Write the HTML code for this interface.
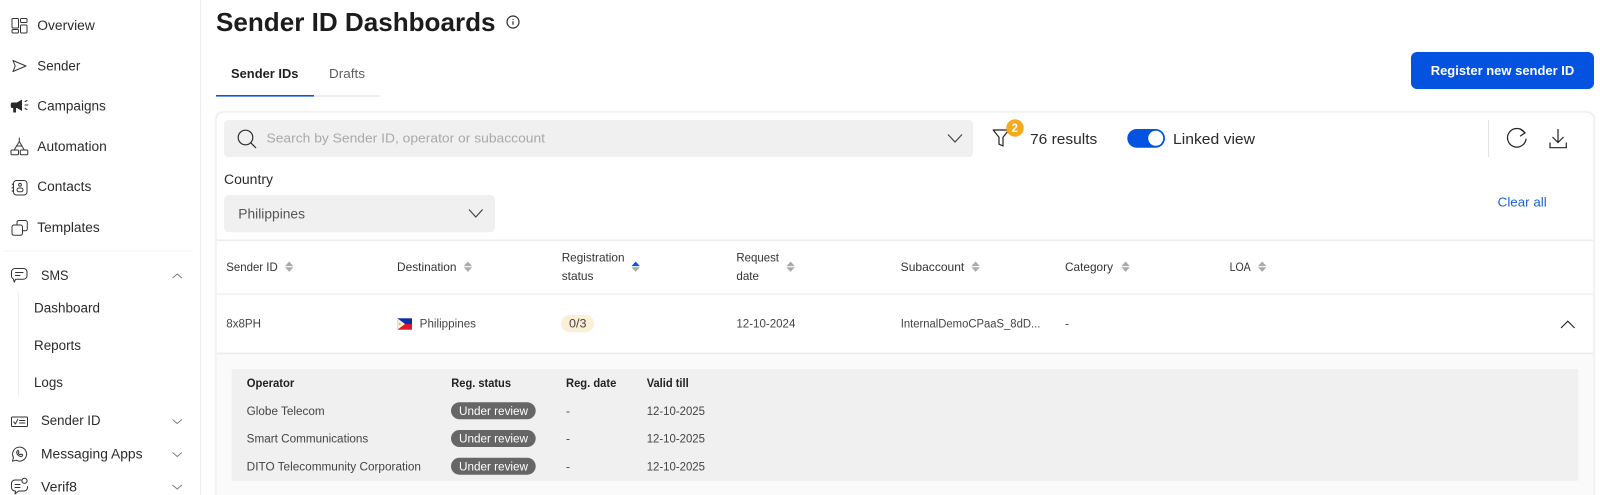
<!DOCTYPE html>
<html lang="en"><head><meta charset="utf-8"><title>Sender ID Dashboards</title>
<style>
html,body{margin:0;padding:0;background:#fff;width:1600px;height:495px;overflow:hidden}
svg{display:block}
text{font-family:"Liberation Sans",sans-serif;fill:#222}
.n{font-size:13.5px;fill:#2b2b2b}
.h{font-size:12px;fill:#333}
.t{font-size:11.5px;fill:#444}
.b{font-size:11.5px;font-weight:700;fill:#222}
.p{font-size:11.5px;fill:#fff}
.i{fill:none;stroke:#333;stroke-width:1;stroke-linejoin:round;stroke-linecap:round}
.c{fill:none;stroke:#777;stroke-width:.9}
.s1{fill:#aaa}
</style></head><body>
<svg width="1600" height="495" viewBox="0 0 1600 495" xmlns="http://www.w3.org/2000/svg">
<defs><filter id="sh" x="-2%" y="-5%" width="104%" height="110%"><feGaussianBlur stdDeviation="1"/></filter>
<g id="so"><path d="M0 4.600 4.200 0 8.400 4.600Z" class="s1"/><path d="M0 5.800 4.200 10.400 8.400 5.800Z" class="s1"/></g></defs>
<rect width="1600" height="495" fill="#fff"/>
<!-- sidebar -->
<rect x="200" y="0" width="1" height="495" fill="#ececec"/>
<rect x="4" y="250.500" width="189" height="1" fill="#f2f2f2"/>
<rect x="18" y="293" width="1" height="104" fill="#f0f0f0"/>
<g class="i">
<rect x="12" y="18.500" width="6.500" height="9.500" rx="1"/><rect x="20.500" y="18.500" width="6.500" height="4" rx="1"/><rect x="12" y="29.500" width="6.500" height="3.500" rx="1"/><rect x="20.500" y="25" width="6.500" height="8" rx="1"/>
<path d="M13 60.500 26 66 13 71.500 15.200 66Z"/>
<path d="M19.300 138v3.500M19.300 141.500 14.500 149.500M19.300 141.500 24 149.500M16.500 146h5.500"/><rect x="11" y="150" width="7.500" height="4.800" rx="1"/><rect x="20.300" y="150" width="7.500" height="4.800" rx="1"/>
<rect x="13.500" y="180.500" width="13.500" height="14.500" rx="3"/><circle cx="20" cy="184.800" r="1.400"/><rect x="17" y="188" width="6" height="3.800" rx="1.900"/><path d="M12.300 184v.8M12.300 187.300v.8M12.300 190.600v.8"/>
<path d="M17 225v-2.500a2 2 0 0 1 2-2h6.300a2 2 0 0 1 2 2v6.300a2 2 0 0 1-2 2H22.500"/><rect x="12" y="225" width="10.500" height="10.300" rx="2"/>
<path d="M15.500 268.500h8a3.500 3.500 0 0 1 3.500 3.500v3.700a3.500 3.500 0 0 1-3.500 3.500h-8l-1.200 3-1-3.300A3.500 3.500 0 0 1 11.500 275.700V272a3.500 3.500 0 0 1 4-3.500Z"/><path d="M15.500 272.500h7.500M15.500 275.500h4.500"/>
<rect x="11.500" y="417" width="16" height="9.500" rx="1"/><path d="M13.800 421.800 15.300 424 17.800 419.300M19.500 420.500h5.500M19.500 423h5.500"/>
<path d="M12.500 461.200l1-3.700a7 7 0 1 1 2.700 2.700Z"/><path d="M16.800 451.500c-.6 2.600 2.300 5.500 5 5l1-1.500-2-1-.8.8c-.8-.3-1.500-1-1.800-1.800l.8-.8-1-2Z"/>
<path d="M21 480h-6a3.500 3.500 0 0 0-3.500 3.500v4a3.500 3.500 0 0 0 3.500 3.500h.5l-.5 3 3.500-3h5.500a3.500 3.500 0 0 0 3.500-3.500V486.500"/><circle cx="24.500" cy="480.800" r="2.600"/><path d="M15 484.500h5M15 487.500h5"/>
</g>
<path d="M10.800 104c0-1 .7-1.500 1.500-1.500H17l5-3v11.500l-5-3h-1v4.500h-2.800v-4.500h-1c-.8 0-1.400-.6-1.400-1.500Z" fill="#2a2a2a"/><path d="M25 101.500l2-1M25 105h2.800M25 108.500l2 1" class="i"/>
<g class="c"><path d="M172.500 278l4.700-4 4.700 4"/><path d="M172.500 419.500l4.700 4 4.700-4"/><path d="M172.500 452.500l4.700 4 4.700-4"/><path d="M172.500 485l4.700 4 4.700-4"/></g>
<text class="n" x="37.300" y="30" textLength="57.500" lengthAdjust="spacingAndGlyphs">Overview</text>
<text class="n" x="37.300" y="70.500" textLength="43" lengthAdjust="spacingAndGlyphs">Sender</text>
<text class="n" x="37.300" y="110.500" textLength="68.500" lengthAdjust="spacingAndGlyphs">Campaigns</text>
<text class="n" x="37.300" y="151" textLength="69.500" lengthAdjust="spacingAndGlyphs">Automation</text>
<text class="n" x="37.300" y="191" textLength="54" lengthAdjust="spacingAndGlyphs">Contacts</text>
<text class="n" x="37.300" y="232" textLength="62.500" lengthAdjust="spacingAndGlyphs">Templates</text>
<text class="n" x="41" y="280" textLength="27.500" lengthAdjust="spacingAndGlyphs">SMS</text>
<text class="n" x="34" y="312.500" textLength="66" lengthAdjust="spacingAndGlyphs">Dashboard</text>
<text class="n" x="34" y="350" textLength="47" lengthAdjust="spacingAndGlyphs">Reports</text>
<text class="n" x="34" y="387" textLength="29" lengthAdjust="spacingAndGlyphs">Logs</text>
<text class="n" x="41" y="425" textLength="59.500" lengthAdjust="spacingAndGlyphs">Sender ID</text>
<text class="n" x="41" y="458.500" textLength="101.500" lengthAdjust="spacingAndGlyphs">Messaging Apps</text>
<text class="n" x="41" y="491.500" textLength="36" lengthAdjust="spacingAndGlyphs">Verif8</text>
<!-- header -->
<text x="216" y="31" font-size="26" font-weight="700" style="fill:#1c1c1c" textLength="279.500" lengthAdjust="spacingAndGlyphs">Sender ID Dashboards</text>
<circle cx="513" cy="22" r="6" fill="none" stroke="#2a2a2a" stroke-width="1.200"/><path d="M513 21.200v3.500M513 19v.9" stroke="#2a2a2a" stroke-width="1.200"/>
<text x="231" y="78" font-size="13" font-weight="700" style="fill:#1f1f1f" textLength="67.500" lengthAdjust="spacingAndGlyphs">Sender IDs</text>
<text x="329" y="78" font-size="13" style="fill:#5e5e5e" textLength="36" lengthAdjust="spacingAndGlyphs">Drafts</text>
<rect x="216" y="95.500" width="164" height="1" fill="#dedede"/><rect x="216" y="95" width="98" height="1.600" fill="#0a56de"/>
<rect x="1411" y="52" width="183" height="37" rx="6" fill="#0353e0"/>
<text x="1430.700" y="75" font-size="13" font-weight="700" style="fill:#fff" textLength="143.600" lengthAdjust="spacingAndGlyphs">Register new sender ID</text>
<!-- card -->
<rect x="216" y="112" width="1378" height="400" rx="7" fill="#bbb" opacity=".55" filter="url(#sh)"/>
<rect x="216.500" y="112.500" width="1377" height="400" rx="7" fill="#fff"/>
<rect x="224" y="120" width="749" height="37" rx="4" fill="#f0f0f0"/>
<circle cx="245.500" cy="137.500" r="7.300" fill="none" stroke="#2e2e2e" stroke-width="1.200"/><path d="M250.800 142.800 256 148" stroke="#2e2e2e" stroke-width="1.200"/>
<text x="266.500" y="142.700" font-size="13" style="fill:#a9a9a9" textLength="278.500" lengthAdjust="spacingAndGlyphs">Search by Sender ID, operator or subaccount</text>
<path d="M948 134.500l7 7.500 7-7.500" fill="none" stroke="#444" stroke-width="1.200"/>
<path d="M993.200 130h15.600l-5.800 7.200v8.800l-4-1.800v-7Z" fill="none" stroke="#222" stroke-width="1.200" stroke-linejoin="round"/>
<circle cx="1015" cy="128" r="8.700" fill="#f6a91b"/>
<text x="1011.500" y="132.200" font-size="11.500" font-weight="700" style="fill:#fff">2</text>
<text x="1030" y="144" font-size="14.500" style="fill:#2a2a2a" textLength="67.300" lengthAdjust="spacingAndGlyphs">76 results</text>
<rect x="1127.300" y="129" width="37.700" height="18.700" rx="9.350" fill="#0353e0"/><circle cx="1155.700" cy="138.300" r="7.500" fill="#fff"/>
<text x="1173" y="144" font-size="14.500" style="fill:#2a2a2a" textLength="82" lengthAdjust="spacingAndGlyphs">Linked view</text>
<rect x="1488" y="120" width="1" height="37" fill="#e2e2e2"/>
<path d="M1524.500 132.500a9.300 9.300 0 1 0 1.600 6.200" fill="none" stroke="#222" stroke-width="1.200"/><path d="M1519.500 128.500l5.600 4.300-5 3.400" fill="none" stroke="#222" stroke-width="1.200"/>
<path d="M1558 129v13M1552.500 137l5.500 5.500 5.500-5.500M1550 142.500v5.200h16.300v-5.200" fill="none" stroke="#222" stroke-width="1.200"/>
<text x="224" y="184" font-size="13.500" style="fill:#2a2a2a" textLength="49" lengthAdjust="spacingAndGlyphs">Country</text>
<rect x="224" y="195" width="271" height="37.300" rx="5" fill="#f0f0f0"/>
<text x="238.300" y="218.300" font-size="13.500" style="fill:#555" textLength="66.700" lengthAdjust="spacingAndGlyphs">Philippines</text>
<path d="M469 209.500l6.800 7.500 6.800-7.500" fill="none" stroke="#444" stroke-width="1.200"/>
<text x="1497.700" y="206.700" font-size="13" style="fill:#1a5fe0" textLength="49" lengthAdjust="spacingAndGlyphs">Clear all</text>
<!-- table -->
<rect x="217" y="239.500" width="1376" height="1.500" fill="#ececec"/>
<rect x="217" y="293.500" width="1376" height="1.300" fill="#efefef"/>
<rect x="217" y="354" width="1376" height="141" fill="#fafafa"/>
<rect x="217" y="352.500" width="1376" height="1.800" fill="#ececec"/>
<text class="h" x="226.300" y="271" textLength="51.400" lengthAdjust="spacingAndGlyphs">Sender ID</text><use href="#so" x="285" y="261.500"/>
<text class="h" x="397" y="271" textLength="59.500" lengthAdjust="spacingAndGlyphs">Destination</text><use href="#so" x="463.700" y="261.500"/>
<text class="h" x="561.700" y="261.700" textLength="62.800" lengthAdjust="spacingAndGlyphs">Registration</text>
<text class="h" x="561.700" y="280" textLength="31.800" lengthAdjust="spacingAndGlyphs">status</text>
<path d="M631.500 266.100 635.700 261.500 639.900 266.100Z" fill="#0a56de"/><path d="M631.500 267.300 635.700 271.900 639.900 267.300Z" class="s1"/>
<text class="h" x="736.400" y="261.700" textLength="42.600" lengthAdjust="spacingAndGlyphs">Request</text>
<text class="h" x="736.400" y="280" textLength="22.600" lengthAdjust="spacingAndGlyphs">date</text><use href="#so" x="786.400" y="261.500"/>
<text class="h" x="900.700" y="271" textLength="63.600" lengthAdjust="spacingAndGlyphs">Subaccount</text><use href="#so" x="971.400" y="261.500"/>
<text class="h" x="1065" y="271" textLength="48" lengthAdjust="spacingAndGlyphs">Category</text><use href="#so" x="1121.400" y="261.500"/>
<text class="h" x="1229.600" y="271" textLength="21.100" lengthAdjust="spacingAndGlyphs">LOA</text><use href="#so" x="1258" y="261.500"/>
<text class="t" x="226.300" y="327.700" textLength="34.700" lengthAdjust="spacingAndGlyphs">8x8PH</text>
<rect x="397.300" y="318.300" width="14.700" height="5.700" fill="#0a2fa8"/><rect x="397.300" y="324" width="14.700" height="5.700" fill="#d8192f"/><path d="M397.300 318.300 405 324 397.300 329.700Z" fill="#f7f3e4"/><circle cx="399.700" cy="324" r="1.200" fill="#f2c230"/>
<text class="t" x="419.700" y="327.700" textLength="56.300" lengthAdjust="spacingAndGlyphs">Philippines</text>
<rect x="561.300" y="315" width="32.700" height="17.300" rx="8.650" fill="#fbefd5"/>
<text class="t" x="569" y="327.700" textLength="17.500" lengthAdjust="spacingAndGlyphs">0/3</text>
<text class="t" x="736.400" y="327.700" textLength="59" lengthAdjust="spacingAndGlyphs">12-10-2024</text>
<text class="t" x="900.700" y="327.700" textLength="139.700" lengthAdjust="spacingAndGlyphs">InternalDemoCPaaS_8dD...</text>
<text class="t" x="1065" y="327.700" textLength="4" lengthAdjust="spacingAndGlyphs">-</text>
<path d="M1561 328l6.800-6.800 6.800 6.800" fill="none" stroke="#222" stroke-width="1.100"/>
<!-- nested -->
<rect x="231.700" y="369" width="1346.600" height="111.700" fill="#f0f0f0"/>
<text class="b" x="246.700" y="387" textLength="47.600" lengthAdjust="spacingAndGlyphs">Operator</text>
<text class="b" x="451.300" y="387" textLength="59.700" lengthAdjust="spacingAndGlyphs">Reg. status</text>
<text class="b" x="566" y="387" textLength="50.300" lengthAdjust="spacingAndGlyphs">Reg. date</text>
<text class="b" x="646.700" y="387" textLength="42" lengthAdjust="spacingAndGlyphs">Valid till</text>
<text class="t" x="246.700" y="415" textLength="78" lengthAdjust="spacingAndGlyphs">Globe Telecom</text>
<text class="t" x="246.700" y="442.700" textLength="121.600" lengthAdjust="spacingAndGlyphs">Smart Communications</text>
<text class="t" x="246.700" y="470.300" textLength="174.300" lengthAdjust="spacingAndGlyphs">DITO Telecommunity Corporation</text>
<rect x="451" y="402.300" width="84.700" height="17" rx="8.500" fill="#666"/><rect x="451" y="430" width="84.700" height="17" rx="8.500" fill="#666"/><rect x="451" y="457.700" width="84.700" height="17" rx="8.500" fill="#666"/>
<text class="p" x="459" y="415" textLength="69" lengthAdjust="spacingAndGlyphs">Under review</text>
<text class="p" x="459" y="442.700" textLength="69" lengthAdjust="spacingAndGlyphs">Under review</text>
<text class="p" x="459" y="470.300" textLength="69" lengthAdjust="spacingAndGlyphs">Under review</text>
<text class="t" x="566" y="415" textLength="4" lengthAdjust="spacingAndGlyphs">-</text>
<text class="t" x="566" y="442.700" textLength="4" lengthAdjust="spacingAndGlyphs">-</text>
<text class="t" x="566" y="470.300" textLength="4" lengthAdjust="spacingAndGlyphs">-</text>
<text class="t" x="646.700" y="415" textLength="58.300" lengthAdjust="spacingAndGlyphs">12-10-2025</text>
<text class="t" x="646.700" y="442.700" textLength="58.300" lengthAdjust="spacingAndGlyphs">12-10-2025</text>
<text class="t" x="646.700" y="470.300" textLength="58.300" lengthAdjust="spacingAndGlyphs">12-10-2025</text>
</svg>
</body></html>
